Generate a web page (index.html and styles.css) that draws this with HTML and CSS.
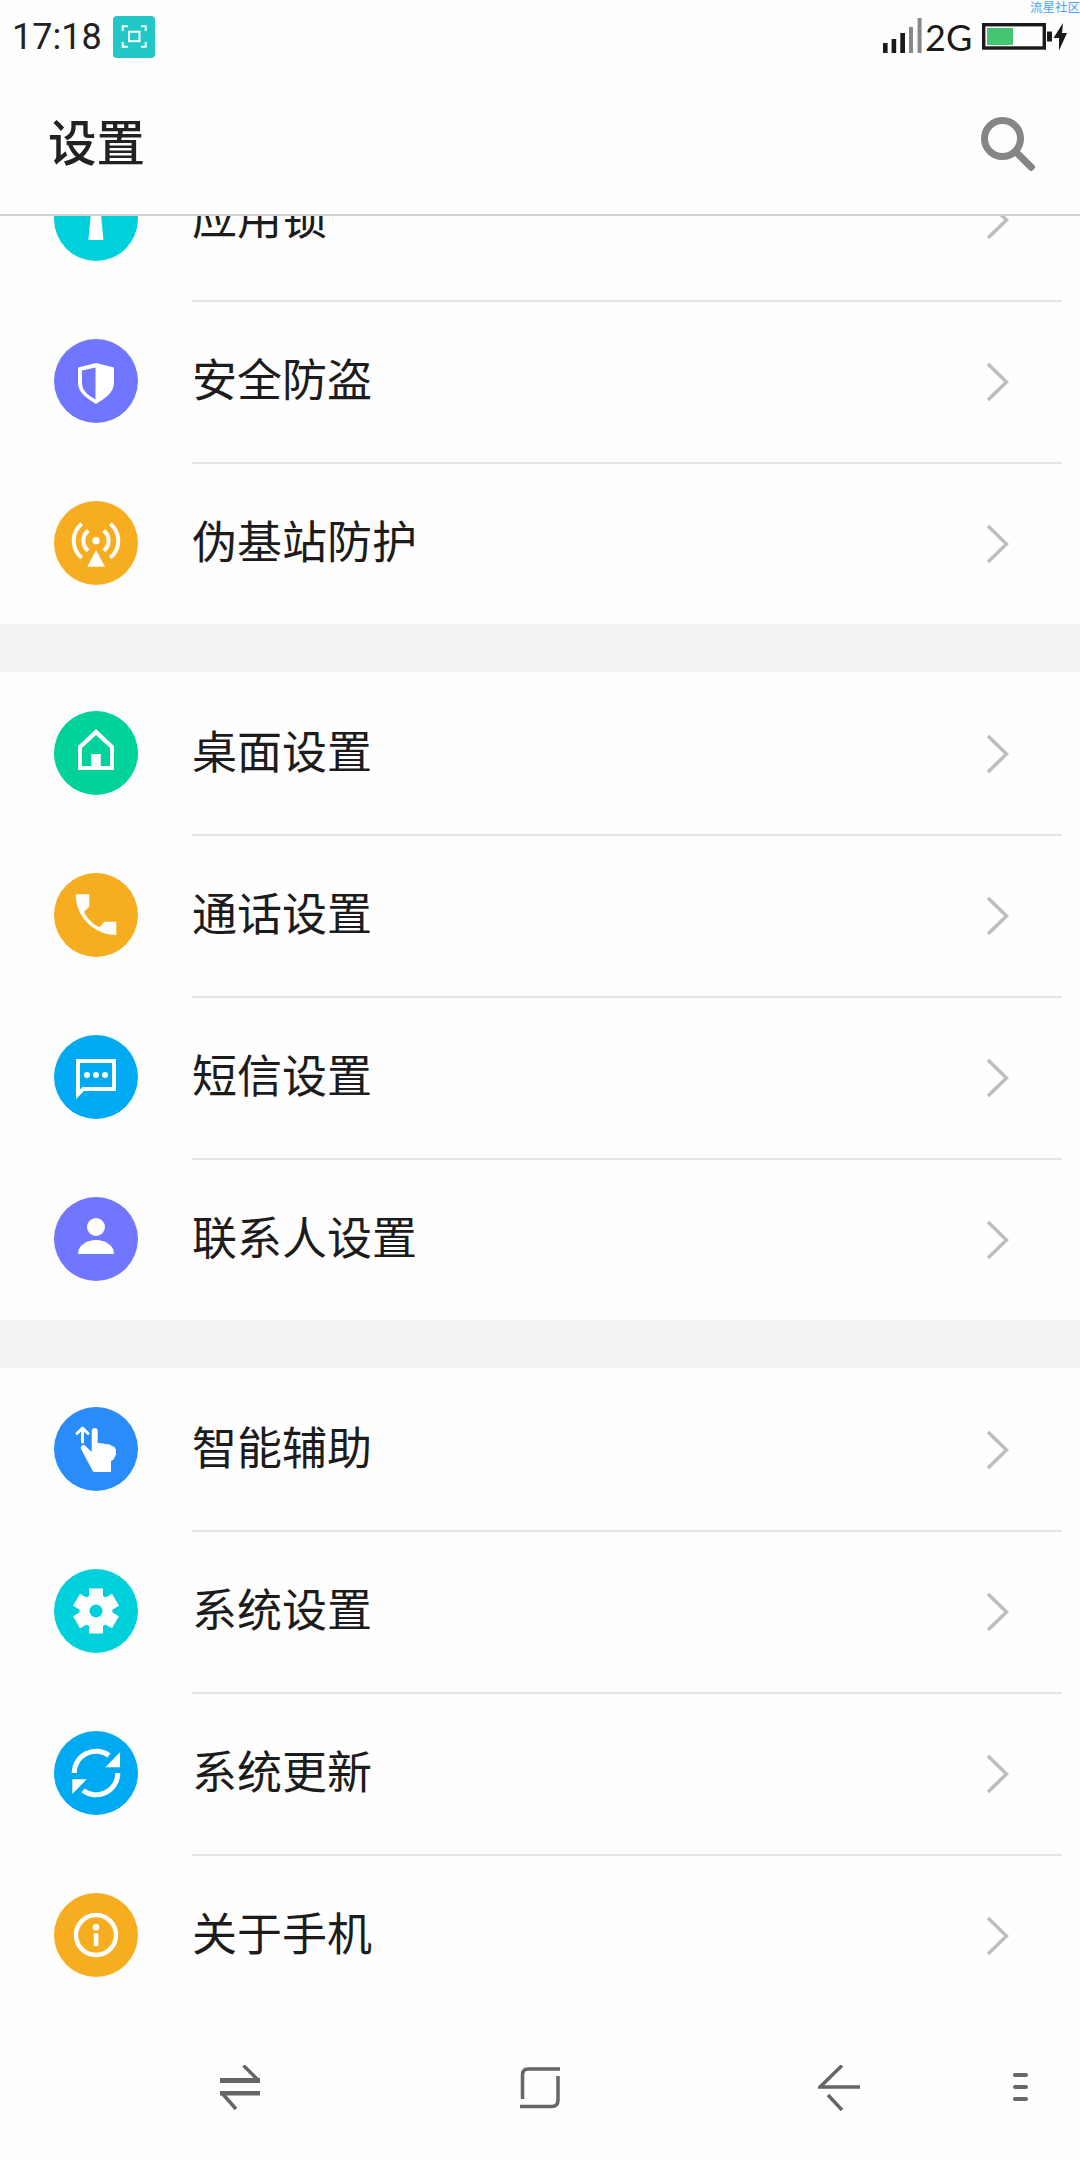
FILE: index.html
```html
<!DOCTYPE html>
<html lang="zh-CN">
<head>
<meta charset="utf-8">
<title>设置</title>
<link rel="stylesheet" href="styles.css">
</head>
<body>
<div class="screen">
  <header class="header">
    <div class="status">
      <span class="time">17:18</span>
      <span class="shot">
        <svg width="42" height="42" viewBox="0 0 42 42"><path class="w-line" d="M9.700 15V10.300H15M28 10.300H32.700V15M32.700 26V30.700H28M15 30.700H9.700V26"/><rect class="w-line" x="16" y="15.700" width="10.500" height="9.500"/></svg>
      </span>
      <span class="status-right">
        <svg class="signal" width="40" height="36" viewBox="0 0 40 36"><path class="s-dark" d="M0 25h4.600v10H0zM8.600 21h4.600v14H8.600zM17.300 15H22v20h-4.700z"/><path class="s-grey" d="M26 9h4v26h-4zM34.600 0h4v35h-4z"/></svg>
        <span class="net">2G</span>
        <svg class="batt" width="86" height="30" viewBox="0 0 86 30"><rect class="b-frame" x="1.700" y="1.700" width="60.600" height="23.300"/><rect class="b-level" x="5" y="5" width="26" height="17"/><path class="s-dark" d="M65 8.500h5v10h-5zM81 0L71.500 15h5.500v12.500L85 10h-5z"/></svg>
      </span>
      <span class="mark">流星社区</span>
    </div>
    <div class="titlebar">
      <h1 class="title">设置</h1>
      <svg class="search" width="54" height="54" viewBox="0 0 54 54"><circle class="search-line" cx="21.500" cy="21.500" r="18"/><path class="search-line" d="M34 34L52.500 52.500"/></svg>
    </div>
  </header>

  <main class="list">
    <section class="group group-first">
      <div class="row">
        <svg class="ico" viewBox="0 0 84 84"><circle class="c-teal" cx="42" cy="42" r="42"/><path class="w" d="M38 26H46L49.400 63H34.400Z"/></svg>
        <div class="row-body"><span class="label">应用锁</span><svg class="chev" viewBox="0 0 24 40"><path d="M2 2L20.500 20L2 38"/></svg></div>
      </div>
      <div class="row">
        <svg class="ico" viewBox="0 0 84 84"><circle class="c-purple" cx="42" cy="42" r="42"/><path class="w" fill-rule="evenodd" d="M42 24L60 28.500V44C60 54 50 60 42 65C34 60 24 54 24 44V28.500ZM41.500 28.500L28 31.500V44C28 52 34 56 41.500 60.500Z"/></svg>
        <div class="row-body"><span class="label">安全防盗</span><svg class="chev" viewBox="0 0 24 40"><path d="M2 2L20.500 20L2 38"/></svg></div>
      </div>
      <div class="row row-last">
        <svg class="ico" viewBox="0 0 84 84"><circle class="c-orange" cx="42" cy="42" r="42"/><circle class="w" cx="42" cy="39.700" r="3.700"/><path class="w" d="M42 49L51 65.700H33.300Z"/><path class="w-arc" d="M34.300 29.700A12.600 12.600 0 0 0 34.300 49.700M49.700 29.700A12.600 12.600 0 0 1 49.700 49.700M27.700 22.700A22 22 0 0 0 27.700 56.700M56.300 22.700A22 22 0 0 1 56.300 56.700"/></svg>
        <div class="row-body"><span class="label">伪基站防护</span><svg class="chev" viewBox="0 0 24 40"><path d="M2 2L20.500 20L2 38"/></svg></div>
      </div>
    </section>

    <section class="group">
      <div class="row">
        <svg class="ico" viewBox="0 0 84 84"><circle class="c-green" cx="42" cy="42" r="42"/><path class="w" fill-rule="evenodd" d="M42 18L60 35V59H24V35ZM42 24L28 37V55H37.500V43H46.500V55H56V37Z"/><path class="w" d="M37.500 43H46.500V55H37.500Z"/></svg>
        <div class="row-body"><span class="label">桌面设置</span><svg class="chev" viewBox="0 0 24 40"><path d="M2 2L20.500 20L2 38"/></svg></div>
      </div>
      <div class="row">
        <svg class="ico" viewBox="0 0 84 84"><circle class="c-orange" cx="42" cy="42" r="42"/><path class="w" d="M21.700 21.300H35.300V33.700L30 38.700C33 45.500 38.500 51 45.700 54.300L50.300 48.700H62.300V62C40 62 21.700 44 21.700 21.300Z"/></svg>
        <div class="row-body"><span class="label">通话设置</span><svg class="chev" viewBox="0 0 24 40"><path d="M2 2L20.500 20L2 38"/></svg></div>
      </div>
      <div class="row">
        <svg class="ico" viewBox="0 0 84 84"><circle class="c-sky" cx="42" cy="42" r="42"/><path class="w" fill-rule="evenodd" d="M22 24H62V56H30L22 64ZM26 28V54.500L28.500 52H58V28Z"/><circle class="w" cx="33" cy="40" r="3"/><circle class="w" cx="42" cy="40" r="3"/><circle class="w" cx="51" cy="40" r="3"/></svg>
        <div class="row-body"><span class="label">短信设置</span><svg class="chev" viewBox="0 0 24 40"><path d="M2 2L20.500 20L2 38"/></svg></div>
      </div>
      <div class="row row-last">
        <svg class="ico" viewBox="0 0 84 84"><circle class="c-purple" cx="42" cy="42" r="42"/><circle class="w" cx="42" cy="30" r="9"/><path class="w" d="M24 57C24 48 33 43 42 43S60 48 60 57Z"/></svg>
        <div class="row-body"><span class="label">联系人设置</span><svg class="chev" viewBox="0 0 24 40"><path d="M2 2L20.500 20L2 38"/></svg></div>
      </div>
    </section>

    <section class="group">
      <div class="row">
        <svg class="ico" viewBox="0 0 84 84"><circle class="c-blue" cx="42" cy="42" r="42"/><path class="w-arrow" d="M28.500 35V21M23 26.500L28.500 21L34 26.500"/><path class="w" d="M37.700 24A3 3 0 0 1 43.700 24V36L50 36.500L51 37L56 37.500L57 38.500L60 39.500L62 43V47.500L59.500 52.500L57 54V65H39.300L27 42C26 39.500 29 37 31 38.500L37.700 45Z"/></svg>
        <div class="row-body"><span class="label">智能辅助</span><svg class="chev" viewBox="0 0 24 40"><path d="M2 2L20.500 20L2 38"/></svg></div>
      </div>
      <div class="row">
        <svg class="ico" viewBox="0 0 84 84"><circle class="c-teal" cx="42" cy="42" r="42"/>
          <g class="w"><rect x="35" y="19.500" width="14" height="12"/><rect x="35" y="19.500" width="14" height="12" transform="rotate(60 42 42)"/><rect x="35" y="19.500" width="14" height="12" transform="rotate(120 42 42)"/><rect x="35" y="19.500" width="14" height="12" transform="rotate(180 42 42)"/><rect x="35" y="19.500" width="14" height="12" transform="rotate(240 42 42)"/><rect x="35" y="19.500" width="14" height="12" transform="rotate(300 42 42)"/><circle cx="42" cy="42" r="16.500"/></g>
          <circle class="c-teal" cx="42" cy="42" r="6.500"/></svg>
        <div class="row-body"><span class="label">系统设置</span><svg class="chev" viewBox="0 0 24 40"><path d="M2 2L20.500 20L2 38"/></svg></div>
      </div>
      <div class="row">
        <svg class="ico" viewBox="0 0 84 84"><circle class="c-sky" cx="42" cy="42" r="42"/><path class="w-sync" d="M20.200 42A21.800 21.800 0 0 1 55 24.500M63.800 42A21.800 21.800 0 0 1 29 59.500"/><path class="w" d="M66 21.300V36.300H51.300ZM18.300 48.300H32.700L18.300 63Z"/></svg>
        <div class="row-body"><span class="label">系统更新</span><svg class="chev" viewBox="0 0 24 40"><path d="M2 2L20.500 20L2 38"/></svg></div>
      </div>
      <div class="row row-last">
        <svg class="ico" viewBox="0 0 84 84"><circle class="c-orange" cx="42" cy="42" r="42"/><circle class="w-ring" cx="42" cy="42" r="20"/><circle class="w" cx="42" cy="34.300" r="3.300"/><rect class="w" x="39.700" y="40.300" width="4.700" height="12.700"/></svg>
        <div class="row-body"><span class="label">关于手机</span><svg class="chev" viewBox="0 0 24 40"><path d="M2 2L20.500 20L2 38"/></svg></div>
      </div>
    </section>
  </main>

  <nav class="nav">
    <svg class="nav-a" width="42" height="46" viewBox="0 0 42 46"><path class="n-fill" d="M0 13h40v5H0zM0 26h40v4.500H0z"/><path class="n-line" d="M23.500 0.500L38.500 15.500M1.500 27.500L16 44"/></svg>
    <svg class="nav-b" width="42" height="42" viewBox="0 0 42 42"><path class="n-line" d="M40 2H8Q2.500 2 2.500 8V32M38 9V33Q38 39.500 31.500 39.500H0"/></svg>
    <svg class="nav-c" width="42" height="46" viewBox="0 0 42 46"><path class="n-line" d="M24 0.500L2 22H42M10 30L24 45"/></svg>
    <svg class="nav-d" width="15" height="46" viewBox="0 0 15 46"><rect class="n-fill" y="8" width="15" height="4" rx="2"/><rect class="n-fill" y="20" width="15" height="4" rx="2"/><rect class="n-fill" y="32" width="15" height="4" rx="2"/></svg>
  </nav>
</div>
</body>
</html>
```

FILE: styles.css
```css
* { box-sizing: border-box; }
html, body { margin: 0; padding: 0; }
body {
  background: #fefefe;
  font-family: Roboto, "Noto Sans CJK SC", sans-serif;
  color: #1c1c1c;
}
.screen {
  width: 1080px;
  height: 2160px;
  display: flex;
  flex-direction: column;
  overflow: hidden;
  background: #fefefe;
}
.header {
  flex: none;
  height: 216px;
  border-bottom: 2px solid #d2d2d2;
}
.status {
  position: relative;
  height: 74px;
  display: flex;
  align-items: center;
  padding: 0 12px 0 12px;
}
.time {
  font-size: 36px;
  line-height: 74px;
  color: #222;
  width: 101px;
}
.shot {
  width: 42px;
  height: 42px;
  border-radius: 4px;
  background: #22c7c7;
  display: block;
}
.shot svg { display: block; }
.w-line { fill: none; stroke: #fff; stroke-width: 2px; }
.status-right {
  margin-left: auto;
  display: flex;
  align-items: center;
}
.signal { margin-right: 2px; margin-bottom: 2px; display: block; }
.s-dark { fill: #1a1a1a; }
.s-grey { fill: #888; }
.net {
  font-family: Lato, "Noto Sans", sans-serif;
  font-size: 36px;
  line-height: 40px;
  width: 57px;
  color: #1a1a1a;
}
.batt { display: block; margin-top: 2px; }
.b-frame { fill: none; stroke: #1a1a1a; stroke-width: 3.400px; }
.b-level { fill: #43c571; }
.mark {
  position: absolute;
  right: 0;
  top: 0;
  font-family: "Noto Sans CJK SC", sans-serif;
  font-size: 12.500px;
  line-height: 14px;
  color: #4da3f2;
}
.titlebar {
  height: 140px;
  display: flex;
  align-items: center;
  justify-content: space-between;
  padding: 0 45px 0 48px;
}
.title {
  margin: 0 0 8px;
  font-family: "Noto Sans CJK SC", sans-serif;
  font-size: 48.500px;
  font-weight: 500;
  line-height: 60px;
  color: #222;
}
.search { display: block; }
.search-line { fill: none; stroke: #858585; stroke-width: 7px; }
.list {
  flex: none;
  height: 1800px;
  overflow: hidden;
  display: flex;
  flex-direction: column;
  gap: 48px;
  background: #f2f2f2;
}
.group { flex: none; background: #fefefe; }
.group-first { margin-top: -78px; }
.row {
  height: 162px;
  display: flex;
  align-items: center;
  padding-left: 54px;
}
.ico {
  flex: none;
  width: 84px;
  height: 84px;
  display: block;
}
.row-body {
  flex: 1;
  align-self: flex-start;
  height: 164px;
  margin-left: 54px;
  margin-right: 18px;
  padding-right: 52px;
  display: flex;
  align-items: center;
  justify-content: space-between;
  border-bottom: 2px solid #e4e4e4;
}
.row-last .row-body { border-bottom-color: transparent; }
.label {
  font-family: "Noto Sans CJK SC", sans-serif;
  font-size: 45px;
  color: #1c1c1c;
  line-height: 60px;
  margin-bottom: 7px;
}
.chev {
  display: block;
  width: 24px;
  height: 40px;
  margin-top: 2px;
  fill: none;
  stroke: #bdbdbd;
  stroke-width: 3.500px;
}
.w { fill: #fff; }
.w-arc { fill: none; stroke: #fff; stroke-width: 4px; }
.w-ring { fill: none; stroke: #fff; stroke-width: 4.500px; }
.w-sync { fill: none; stroke: #fff; stroke-width: 5px; }
.w-arrow { fill: none; stroke: #fff; stroke-width: 3px; stroke-linecap: round; stroke-linejoin: round; }
.c-teal { fill: #00d0dc; }
.c-purple { fill: #7076ff; }
.c-orange { fill: #f6ad20; }
.c-green { fill: #00d29a; }
.c-sky { fill: #00aaf2; }
.c-blue { fill: #2a8cfa; }
.nav {
  flex: none;
  height: 144px;
  display: flex;
  align-items: center;
  padding-left: 220px;
}
.nav svg { display: block; flex: none; }
.nav-b { margin-left: 258px; }
.nav-c { margin-left: 256px; }
.nav-d { margin-left: 153px; }
.n-fill { fill: #666; }
.n-line { fill: none; stroke: #666; stroke-width: 3.500px; }
```
